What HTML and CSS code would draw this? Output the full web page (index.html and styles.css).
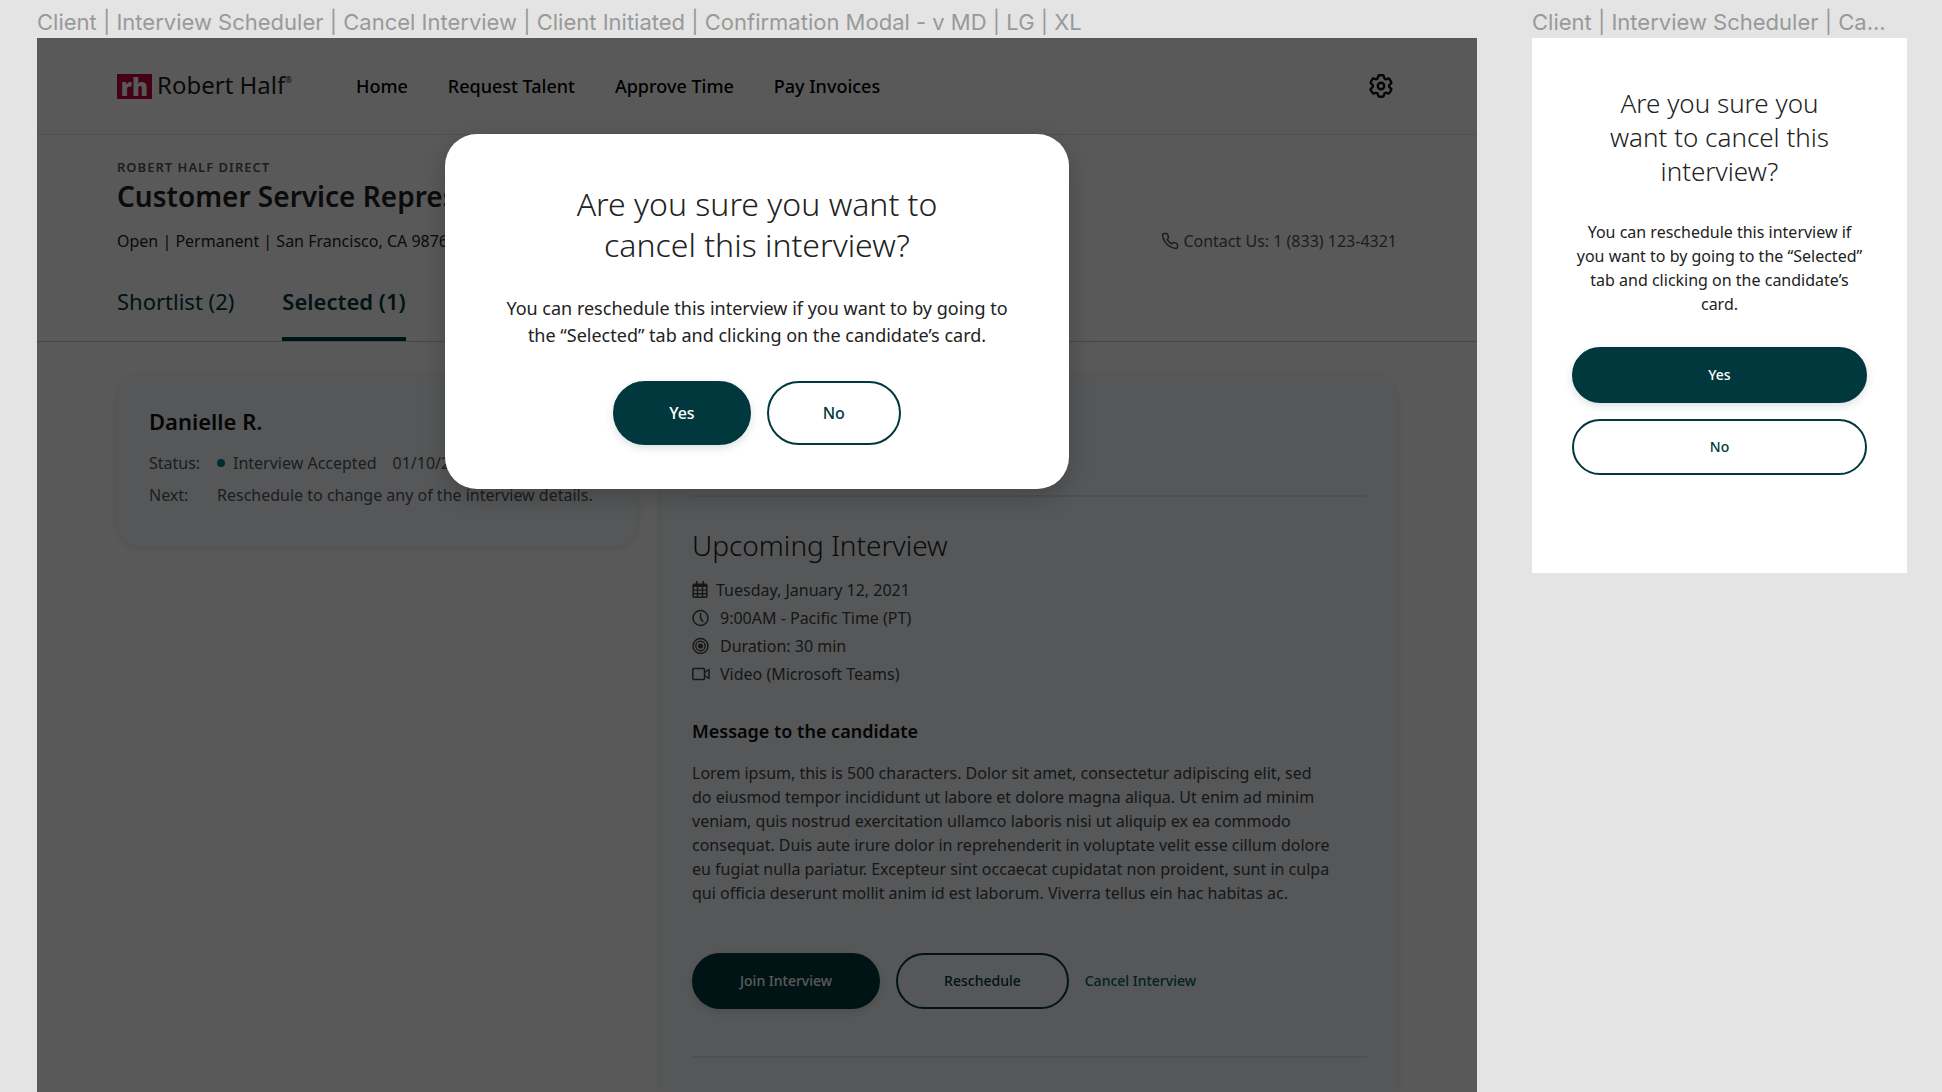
FILE: index.html
```html
<!DOCTYPE html>
<html lang="en">
<head>
<meta charset="utf-8">
<meta name="viewport" content="width=device-width, initial-scale=1">
<title>Cancel Interview – Confirmation Modal</title>
<link rel="stylesheet" href="styles.css">
</head>
<body>
<main class="canvas">
  <section class="artboard">
    <p class="artboard-label">Client | Interview Scheduler | Cancel Interview | Client Initiated | Confirmation Modal - v MD | LG | XL</p>
    <div class="screen">
      <header class="site-header">
        <a class="logo" href="#"><span class="logo-mark">rh</span><span class="logo-name">Robert Half<span class="logo-reg">®</span></span></a>
        <nav class="main-nav">
          <a href="#">Home</a>
          <a href="#">Request Talent</a>
          <a href="#">Approve Time</a>
          <a href="#">Pay Invoices</a>
        </nav>
        <button class="settings" type="button" aria-label="Settings">
          <svg width="24" height="24" viewBox="2 2 20 20" fill="none" stroke="currentColor" stroke-width="2" stroke-linejoin="round"><path d="M9.594 3.94c.09-.542.56-.94 1.11-.94h2.593c.55 0 1.02.398 1.11.94l.213 1.281c.063.374.313.686.645.87.074.04.147.083.22.127.325.196.72.257 1.075.124l1.217-.456a1.125 1.125 0 0 1 1.37.49l1.296 2.247a1.125 1.125 0 0 1-.26 1.431l-1.003.827c-.293.241-.438.613-.43.992a7.723 7.723 0 0 1 0 .255c-.008.378.137.75.43.991l1.004.827c.424.35.534.955.26 1.43l-1.298 2.247a1.125 1.125 0 0 1-1.369.491l-1.217-.456c-.355-.133-.75-.072-1.076.124a6.47 6.47 0 0 1-.22.128c-.331.183-.581.495-.644.869l-.213 1.281c-.09.543-.56.94-1.11.94h-2.594c-.55 0-1.019-.398-1.11-.94l-.213-1.281c-.062-.374-.312-.686-.644-.87a6.52 6.52 0 0 1-.22-.127c-.325-.196-.72-.257-1.076-.124l-1.217.456a1.125 1.125 0 0 1-1.369-.49l-1.297-2.247a1.125 1.125 0 0 1 .26-1.431l1.004-.827c.292-.24.437-.613.43-.991a6.932 6.932 0 0 1 0-.255c.007-.38-.138-.751-.43-.992l-1.004-.827a1.125 1.125 0 0 1-.26-1.43l1.297-2.247a1.125 1.125 0 0 1 1.37-.491l1.216.456c.356.133.751.072 1.076-.124.072-.044.146-.086.22-.128.332-.183.582-.495.644-.869l.214-1.28Z"/><circle cx="12" cy="12" r="2.7"/></svg>
        </button>
      </header>

      <div class="job">
        <p class="job-type">ROBERT HALF DIRECT</p>
        <h1 class="job-title">Customer Service Representative</h1>
        <div class="job-meta">
          <span>Open | Permanent | San Francisco, CA 98765</span>
          <a class="contact" href="#"><svg width="18" height="18" viewBox="0 0 24 24" fill="none" stroke="currentColor" stroke-width="2" stroke-linejoin="round"><path d="M22 16.92v3a2 2 0 0 1-2.18 2 19.79 19.79 0 0 1-8.63-3.07 19.5 19.5 0 0 1-6-6A19.79 19.79 0 0 1 2.12 4.18 2 2 0 0 1 4.11 2h3a2 2 0 0 1 2 1.72c.127.96.361 1.903.7 2.81a2 2 0 0 1-.45 2.11L8.09 9.91a16 16 0 0 0 6 6l1.27-1.27a2 2 0 0 1 2.11-.45c.907.339 1.85.573 2.81.7A2 2 0 0 1 22 16.92z"/></svg>Contact Us: 1 (833) 123-4321</a>
        </div>
      </div>
      <nav class="tabs">
        <a href="#">Shortlist (2)</a>
        <a class="active" href="#">Selected (1)</a>
      </nav>

      <div class="cards">
        <article class="card candidate">
          <h2 class="candidate-name">Danielle R.</h2>
          <dl class="facts">
            <dt>Status:</dt>
            <dd><span class="dot"></span><span>Interview Accepted</span><span class="date">01/10/2021</span></dd>
            <dt>Next:</dt>
            <dd>Reschedule to change any of the interview details.</dd>
          </dl>
        </article>

        <article class="card detail">
          <div class="detail-top"></div>
          <h2 class="detail-title">Upcoming Interview</h2>
          <ul class="schedule">
            <li class="day"><svg width="16" height="18" viewBox="0 0 16 18"><path fill="currentColor" fill-rule="evenodd" d="M4 0h1.6v2.4h4.8V0H12v2.4h2a1.6 1.6 0 0 1 1.6 1.6v11.4a1.6 1.6 0 0 1-1.6 1.6H2A1.6 1.6 0 0 1 .4 15.4V4A1.6 1.6 0 0 1 2 2.4h2zM2 6v2.4h2.8V6zm4.2 0v2.4h3.6V6zm5 0v2.4H14V6zM2 9.8v2.2h2.8V9.8zm4.2 0v2.2h3.6V9.8zm5 0v2.2H14V9.8zM2 13.4v2h2.8v-2zm4.2 0v2h3.6v-2zm5 0v2H14v-2z"/></svg>Tuesday, January 12, 2021</li>
            <li><svg width="18" height="18" viewBox="0 0 18 18" fill="none" stroke="currentColor" stroke-width="1.5"><circle cx="8.5" cy="9" r="7.5"/><path d="M8.5 4v5l2.5 4"/></svg>9:00AM - Pacific Time (PT)</li>
            <li><svg width="18" height="18" viewBox="0 0 18 18" fill="none" stroke="currentColor" stroke-width="1.5"><circle cx="8.5" cy="9" r="7.5"/><circle cx="8.5" cy="9" r="4.7"/><circle cx="8.5" cy="9" r="1.8" fill="currentColor"/></svg>Duration: 30 min</li>
            <li><svg width="18" height="18" viewBox="0 0 18 18" fill="none" stroke="currentColor" stroke-width="1.5" stroke-linejoin="round"><rect x=".8" y="3.5" width="11.7" height="11" rx="1"/><path d="M12.5 7.5l4.5-3v9l-4.5-3"/></svg>Video (Microsoft Teams)</li>
          </ul>
          <h3 class="message-title">Message to the candidate</h3>
          <p class="message">Lorem ipsum, this is 500 characters. Dolor sit amet, consectetur adipiscing elit, sed do eiusmod tempor incididunt ut labore et dolore magna aliqua. Ut enim ad minim veniam, quis nostrud exercitation ullamco laboris nisi ut aliquip ex ea commodo consequat. Duis aute irure dolor in reprehenderit in voluptate velit esse cillum dolore eu fugiat nulla pariatur. Excepteur sint occaecat cupidatat non proident, sunt in culpa qui officia deserunt mollit anim id est laborum. Viverra tellus ein hac habitas ac.</p>
          <div class="detail-actions">
            <button class="btn btn-primary" type="button">Join Interview</button>
            <button class="btn btn-outline" type="button">Reschedule</button>
            <a class="cancel-link" href="#">Cancel Interview</a>
          </div>
          <hr class="rule">
        </article>
      </div>

      <div class="overlay">
        <div class="modal" role="dialog" aria-modal="true" aria-labelledby="modal-title">
          <h2 class="modal-title" id="modal-title">Are you sure you want to cancel this interview?</h2>
          <p class="modal-text">You can reschedule this interview if you want to by going to the “Selected” tab and clicking on the candidate’s card.</p>
          <div class="modal-actions">
            <button class="btn btn-large btn-primary" type="button">Yes</button>
            <button class="btn btn-large btn-outline" type="button">No</button>
          </div>
        </div>
      </div>
    </div>
  </section>

  <section class="artboard">
    <p class="artboard-label">Client | Interview Scheduler | Ca...</p>
    <div class="mobile">
      <h2 class="mobile-title">Are you sure you want to cancel this interview?</h2>
      <p class="mobile-text">You can reschedule this interview if you want to by going to the “Selected” tab and clicking on the candidate’s card.</p>
      <div class="mobile-actions">
        <button class="btn btn-primary" type="button">Yes</button>
        <button class="btn btn-outline" type="button">No</button>
      </div>
    </div>
  </section>
</main>
</body>
</html>
```
FILE: styles.css
```css
* {
  box-sizing: border-box;
  margin: 0;
}

body {
  background: #e4e4e4;
  color: #222;
  font: 16px/24px "Noto Sans", sans-serif;
}

a {
  color: inherit;
  text-decoration: none;
}

.canvas {
  display: grid;
  grid-template-columns: 1440fr 375fr;
  gap: 55px;
  height: 100vh;
  padding: 0 35px 0 37px;
  overflow: hidden;
}

.artboard {
  display: flex;
  flex-direction: column;
  min-width: 0;
}

.artboard-label {
  flex: none;
  height: 38px;
  padding-top: 6px;
  overflow: hidden;
  color: #999;
  font: 22px/32px Inter, sans-serif;
  white-space: nowrap;
}

/* Desktop screen */
.screen {
  position: relative;
  display: flex;
  flex: 1;
  flex-direction: column;
  background: #fff;
}

.site-header {
  display: flex;
  align-items: center;
  height: 97px;
  padding: 0 80px;
  border-bottom: 1px solid #e4e4e4;
}

.logo {
  display: flex;
  gap: 5px;
  color: #222;
}

.logo-mark {
  width: 35px;
  height: 25px;
  background: #c8003c;
  color: #fff;
  font: 800 24px/25px "Open Sans", sans-serif;
  text-align: center;
}

.logo-name {
  font-size: 24px;
  line-height: 22px;
}

.logo-reg {
  font-size: 8px;
  line-height: 12px;
  vertical-align: top;
}

.main-nav {
  display: flex;
  gap: 40px;
  margin-left: 64px;
  color: #000;
  font-size: 18px;
  font-weight: 500;
}

.settings {
  display: flex;
  margin-right: 4px;
  margin-left: auto;
  padding: 0;
  border: 0;
  background: none;
  color: #111;
}

.job {
  padding: 22px 80px 0;
}

.job-type {
  color: #555;
  font-size: 13px;
  font-weight: 600;
  line-height: 20px;
  letter-spacing: 1px;
}

.job-title {
  color: #222;
  font-size: 28px;
  font-weight: 600;
  line-height: 38px;
}

.job-meta {
  display: flex;
  justify-content: space-between;
  margin-top: 14px;
}

.contact {
  display: flex;
  align-items: center;
  gap: 4px;
  color: #555;
}

.tabs {
  display: flex;
  gap: 48px;
  margin-top: 32px;
  padding: 0 80px;
  border-bottom: 1px solid #ccc;
  color: #00383d;
  font-size: 22px;
  line-height: 32px;
}

.tabs a {
  padding-bottom: 20px;
  border-bottom: 4px solid transparent;
}

.tabs .active {
  border-color: #00383d;
  font-weight: 600;
}

.cards {
  display: grid;
  flex: 1;
  grid-template-columns: 520fr 737fr;
  align-items: start;
  gap: 23px;
  padding: 33px 80px 0;
}

.card {
  border-radius: 24px;
  background: #f6f9fb;
  box-shadow: 0 1px 6px rgba(0, 40, 60, .15);
}

.candidate {
  padding: 29px 32px 40px;
}

.candidate-name {
  color: #111;
  font-size: 22px;
  font-weight: 600;
  line-height: 34px;
}

.facts {
  display: grid;
  grid-template-columns: 68px 1fr;
  row-gap: 8px;
  margin-top: 13px;
  color: #555;
  white-space: nowrap;
}

.facts dd {
  display: flex;
  align-items: center;
}

.dot {
  width: 8px;
  height: 8px;
  margin-right: 8px;
  border-radius: 50%;
  background: #007f85;
}

.date {
  margin-left: 16px;
}

.detail {
  align-self: stretch;
  padding: 0 30px 0 32px;
  border-radius: 24px 24px 0 0;
}

.detail-top {
  height: 122px;
  border-bottom: 2px solid #e4e4e4;
}

.detail-title {
  margin-top: 28px;
  color: #222;
  font-size: 28px;
  font-weight: 300;
  line-height: 40px;
}

.schedule {
  display: grid;
  gap: 4px;
  margin-top: 13px;
  padding: 0;
  color: #444;
  list-style: none;
}

.schedule li {
  display: flex;
  align-items: center;
  gap: 10px;
}

.schedule .day {
  gap: 8px;
}

.message-title {
  margin-top: 32px;
  color: #111;
  font-size: 18px;
  font-weight: 600;
  line-height: 26px;
}

.message {
  max-width: 640px;
  margin-top: 17px;
  color: #444;
}

.detail-actions {
  display: flex;
  align-items: center;
  gap: 16px;
  margin-top: 48px;
}

.cancel-link {
  color: #00675b;
  font-size: 14px;
  font-weight: 500;
}

.rule {
  height: 2px;
  margin-top: 47px;
  border: 0;
  background: #e0e4e6;
}

/* Buttons */
.btn {
  height: 56px;
  padding: 0 46px;
  border: 2px solid #00383d;
  border-radius: 28px;
  background: transparent;
  color: #00383d;
  font: 500 14px/20px "Noto Sans", sans-serif;
}

.btn-primary {
  background: #00383d;
  box-shadow: 0 3px 8px rgba(0, 40, 60, .15);
  color: #fff;
}

.btn-large {
  height: 64px;
  padding: 0 54px;
  border-radius: 32px;
  font-size: 16px;
}

/* Confirmation modal */
.overlay {
  position: absolute;
  inset: 0;
  display: flex;
  align-items: flex-start;
  justify-content: center;
  padding-top: 96px;
  background: rgba(0, 0, 0, .65);
}

.modal {
  width: 624px;
  padding: 49px 56px 44px;
  border-radius: 32px;
  background: #fff;
  box-shadow: 0 8px 24px rgba(0, 0, 0, .2);
  text-align: center;
}

.modal-title {
  padding: 0 64px;
  font-size: 32px;
  font-weight: 300;
  line-height: 41px;
}

.modal-text {
  margin-top: 30px;
  font-size: 18px;
  line-height: 27px;
}

.modal-actions {
  display: flex;
  justify-content: center;
  gap: 16px;
  margin-top: 32px;
}

/* Mobile screen */
.mobile {
  min-height: 535px;
  padding: 48px 40px;
  background: #fff;
  text-align: center;
}

.mobile-title {
  padding: 0 32px;
  font-size: 26px;
  font-weight: 300;
  line-height: 34px;
}

.mobile-text {
  margin-top: 32px;
}

.mobile-actions {
  display: grid;
  gap: 16px;
  margin-top: 31px;
}
```
